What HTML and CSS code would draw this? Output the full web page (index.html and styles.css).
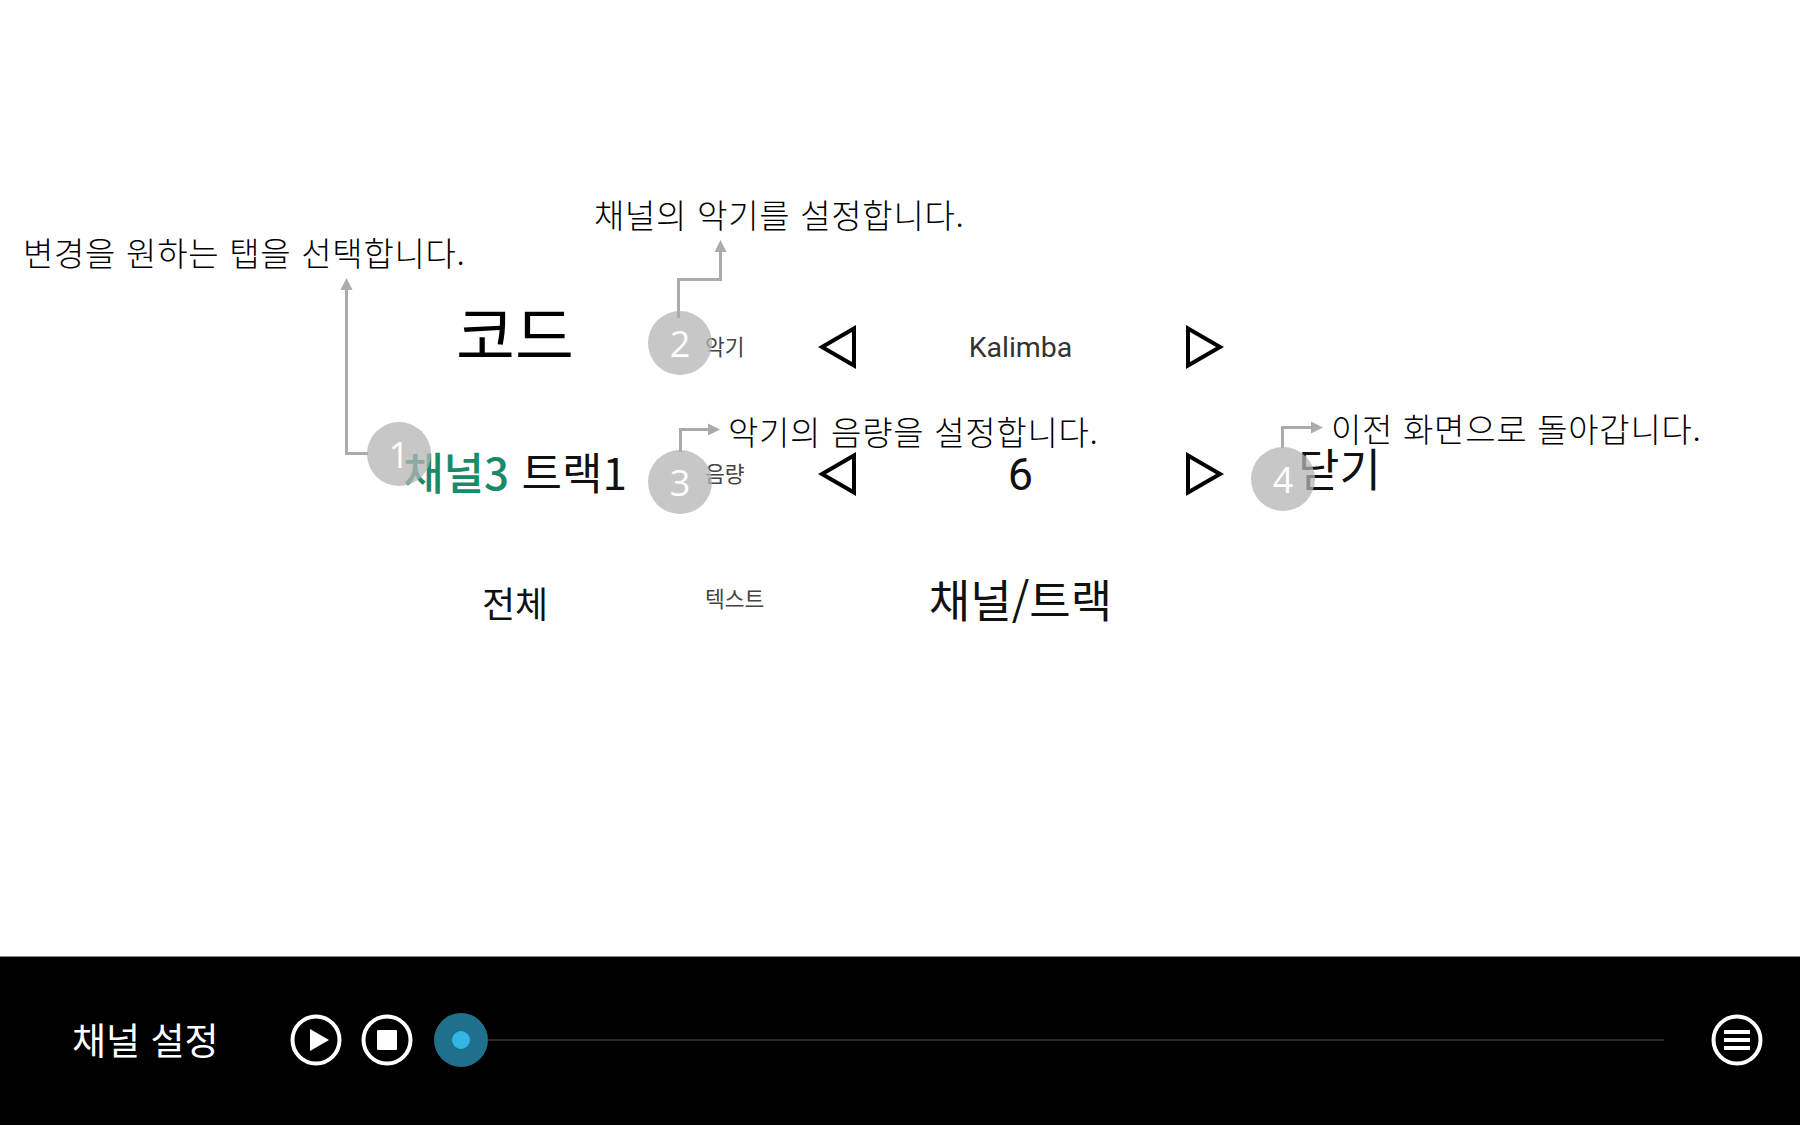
FILE: index.html
```html
<!DOCTYPE html>
<html lang="ko">
<head>
    <meta charset="UTF-8">
    <meta name="viewport" content="width=device-width, initial-scale=1.0">
    <title>채널 설정</title>
    <link rel="stylesheet" href="styles.css">
</head>
<body>
    <main class="screen">
        <div class="settings">
            <div class="tab tab-code">코드</div>
            <div class="label">악기</div>
            <svg class="arrow" viewBox="0 0 38 42"><path d="M35 2.500 L3 21 L35 39.500 Z"/></svg>
            <div class="value value-name">Kalimba</div>
            <svg class="arrow" viewBox="0 0 38 42"><path d="M3 2.500 L35 21 L3 39.500 Z"/></svg>
            <div></div>

            <div class="tab tab-track"><span class="channel">채널3</span> 트랙1</div>
            <div class="label">음량</div>
            <svg class="arrow" viewBox="0 0 38 42"><path d="M35 2.500 L3 21 L35 39.500 Z"/></svg>
            <div class="value value-num">6</div>
            <svg class="arrow" viewBox="0 0 38 42"><path d="M3 2.500 L35 21 L3 39.500 Z"/></svg>
            <div class="close">닫기</div>

            <div class="tab tab-all">전체</div>
            <div class="label label-text">텍스트</div>
            <div></div>
            <div class="value value-text">채널/트랙</div>
            <div></div>
            <div></div>
        </div>

        <!-- help overlay -->
        <div class="note note-1">변경을 원하는 탭을 선택합니다.</div>
        <div class="note note-2">채널의 악기를 설정합니다.</div>
        <div class="note note-3">악기의 음량을 설정합니다.</div>
        <div class="note note-4">이전 화면으로 돌아갑니다.</div>
        <div class="badge badge-1">1</div>
        <div class="badge badge-2">2</div>
        <div class="badge badge-3">3</div>
        <div class="badge badge-4">4</div>
        <svg class="lines" viewBox="0 0 1800 956">
            <path class="line" d="M368 453.500 H346.500 V286"/>
            <path class="head" d="M346.500 278 L352.500 290 H340.500 Z"/>
            <path class="line" d="M678.500 318 V279.500 H720.500 V250"/>
            <path class="head" d="M720.500 240 L726.500 252 H714.500 Z"/>
            <path class="line" d="M680.500 452 V429.500 H710"/>
            <path class="head" d="M720 429.500 L708 423.500 V435.500 Z"/>
            <path class="line" d="M1282.500 448 V427.500 H1313"/>
            <path class="head" d="M1323 427.500 L1311 421.500 V433.500 Z"/>
        </svg>
    </main>

    <footer class="player">
        <div class="player-title">채널 설정</div>
        <svg class="round-btn" viewBox="0 0 52 52">
            <circle cx="26" cy="26" r="23.500"/>
            <path class="fill" d="M20 15 L39 26 L20 37 Z"/>
        </svg>
        <svg class="round-btn" viewBox="0 0 52 52">
            <circle cx="26" cy="26" r="23.500"/>
            <rect class="fill" x="16" y="16" width="20" height="20" rx="1"/>
        </svg>
        <div class="seek">
            <div class="thumb"><div class="thumb-dot"></div></div>
            <div class="track"></div>
        </div>
        <svg class="round-btn" viewBox="0 0 52 52">
            <circle cx="26" cy="26" r="23.500"/>
            <rect class="fill" x="13" y="16" width="26" height="4"/>
            <rect class="fill" x="13" y="24" width="26" height="4"/>
            <rect class="fill" x="13" y="32" width="26" height="4"/>
        </svg>
    </footer>
</body>
</html>
```

FILE: styles.css
```css
* {
    box-sizing: border-box;
}

body {
    margin: 0;
    background: #fff;
    font-family: "Noto Sans CJK KR", "Noto Sans", sans-serif;
    color: #111;
}

.screen {
    position: relative;
    height: 956px;
    padding: 282px 0 0 360px;
}

.settings {
    display: grid;
    grid-template-columns: 310px 110px 116px 249px 118px 200px;
    grid-template-rows: 127px 127px 127px;
    align-items: center;
}

.tab {
    text-align: center;
    white-space: nowrap;
}

.tab-code {
    font-size: 64px;
    line-height: 1;
    color: #000;
    margin-top: -30px;
}

.tab-track {
    font-size: 44px;
    line-height: 1;
    margin-top: -4px;
}

.channel {
    color: #1b8a68;
    font-weight: 500;
}

.tab-all {
    font-size: 36px;
    line-height: 1;
    margin-top: 4px;
}

.label {
    padding-left: 35px;
    font-size: 21.500px;
    color: #444;
    line-height: 1;
    white-space: nowrap;
}

.label-text {
    margin-top: -4px;
}

.arrow {
    width: 38px;
    height: 42px;
    justify-self: center;
    fill: none;
    stroke: #000;
    stroke-width: 4;
    overflow: visible;
    margin-top: 2px;
}

.value {
    text-align: center;
    line-height: 1;
}

.value-name {
    font-family: Roboto, sans-serif;
    font-size: 28.500px;
    color: #333;
    margin-top: 6px;
}

.value-num {
    font-family: Roboto, sans-serif;
    font-size: 45px;
    margin-top: 4px;
}

.value-text {
    font-size: 45px;
    margin-top: -2px;
}

.close {
    padding-left: 35px;
    font-size: 45px;
    line-height: 1;
    margin-top: -10px;
    white-space: nowrap;
}

.lines {
    position: absolute;
    left: 0;
    top: 0;
    width: 1800px;
    height: 956px;
    pointer-events: none;
}

.line {
    fill: none;
    stroke: #aeaaaa;
    stroke-width: 3;
}

.head {
    fill: #aeaaaa;
}

.note {
    position: absolute;
    font-size: 33px;
    letter-spacing: 0.7px;
    line-height: 40px;
    font-weight: 300;
    color: #000;
    white-space: nowrap;
}

.note-1 { left: 23px; top: 232px; }
.note-2 { left: 594px; top: 194px; }
.note-3 { left: 728px; top: 411px; }
.note-4 { left: 1331px; top: 408px; }

.badge {
    position: absolute;
    width: 64px;
    height: 64px;
    border-radius: 50%;
    background: rgba(182, 180, 180, 0.75);
    color: #fff;
    font-family: "Open Sans", sans-serif;
    font-size: 36px;
    display: flex;
    align-items: center;
    justify-content: center;
}

.badge-1 { left: 367px; top: 422px; }
.badge-2 { left: 648px; top: 311px; }
.badge-3 { left: 648px; top: 450px; }
.badge-4 { left: 1251px; top: 447px; }

.player {
    height: 169px;
    background: #000;
    border-top: 1px solid #888;
    padding: 0 37px 2px 72px;
    display: flex;
    align-items: center;
    color: #fff;
}

.player-title {
    width: 218px;
    font-size: 37px;
    line-height: 1;
    white-space: nowrap;
    margin-top: -2px;
}

.round-btn {
    width: 52px;
    height: 52px;
    flex: none;
    margin-right: 19px;
    fill: none;
    stroke: #fff;
    stroke-width: 4;
}

.round-btn .fill {
    fill: #fff;
    stroke: none;
}

.seek {
    flex: 1;
    display: flex;
    align-items: center;
    margin: 0 47px 0 2px;
}

.round-btn:last-child {
    margin-right: 0;
}

.thumb {
    width: 54px;
    height: 54px;
    border-radius: 50%;
    background: #1f6f8d;
    display: flex;
    align-items: center;
    justify-content: center;
}

.thumb-dot {
    width: 18px;
    height: 18px;
    border-radius: 50%;
    background: #33b5e5;
}

.track {
    flex: 1;
    height: 2px;
    background: #2b2b2b;
}
```
